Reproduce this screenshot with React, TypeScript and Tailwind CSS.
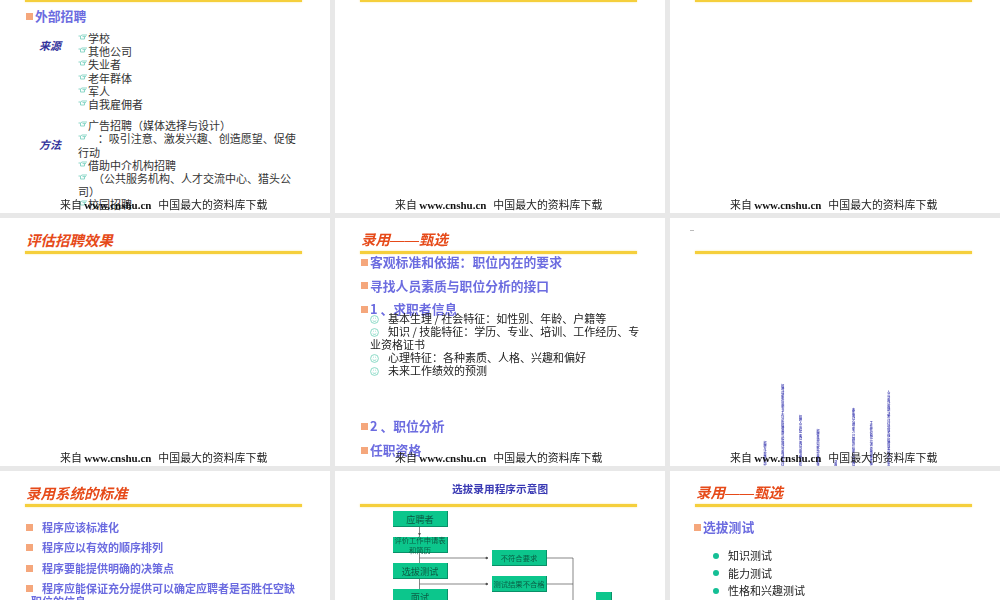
import React from 'react';

const cjk = "font-['Noto_Sans_CJK_SC','Noto_Sans',sans-serif]";

const Square = () => <span className="inline-block w-[7px] h-[7px] bg-[#f5a77c] align-[1px]" />;

const Footer = () => (
  <div className="absolute left-[60px] bottom-[1px] z-10 whitespace-pre text-[10.9px] leading-[14px] text-[#222] font-['Noto_Sans_CJK_SC',sans-serif]">
    来自 <span className="font-['Liberation_Serif',serif] font-bold text-[11px] text-[#111] mr-[2px]">www.cnshu.cn</span>  中国最大的资料库下载
  </div>
);

const Slide = ({ title, children }: { title?: React.ReactNode; children?: React.ReactNode }) => (
  <div className={`relative bg-white overflow-hidden ${cjk}`}>
    <div className="h-[33px] flex items-end pl-[26px] pb-[1px] text-[14.5px] leading-[20px] font-bold italic text-[#e64a19]">
      {title}
    </div>
    <div className="mx-[25px] w-[277px] h-[3px] bg-[#f5cf3c] shadow-[0_0_2px_#f8e48c]" />
    {children}
    <Footer />
  </div>
);

const ScreenTitle = () => (
  <span>
    录用<span className="font-['Liberation_Sans',sans-serif] font-normal">——</span>甄选
  </span>
);

// pointing hand bullet
const Hand = () => (
  <svg width="10" height="7" viewBox="0 0 10 7" className="inline-block align-[2px]" fill="none" stroke="#7fd3c2" strokeWidth="0.9">
    <path d="M0.5 2H2.5L4 1H9M4.5 2.6H8M2.5 2V5H6.5V2.8" />
  </svg>
);

const Heading = ({ children, className = '' }: { children: React.ReactNode; className?: string }) => (
  <div className={`flex items-center gap-[2px] text-[12.8px] leading-[18px] font-bold text-[#6c6ce0] ${className}`}>
    <Square />
    <span>{children}</span>
  </div>
);

const sources = ['学校', '其他公司', '失业者', '老年群体', '军人', '自我雇佣者'];
const methods = [
  '广告招聘（媒体选择与设计）',
  '    ：吸引注意、激发兴趣、创造愿望、促使行动',
  '借助中介机构招聘',
  '  （公共服务机构、人才交流中心、猎头公司）',
  '校园招聘',
];

const HandList = ({ items }: { items: string[] }) => (
  <div className="w-[224px] text-[11px] leading-[13.2px] text-[#333]">
    {items.map((t) => (
      <div key={t} className="whitespace-pre-wrap">
        <Hand />
        {t}
      </div>
    ))}
  </div>
);

const Label = ({ children }: { children: React.ReactNode }) => (
  <div className="text-[11px] leading-[14px] font-bold italic text-[#34349c]">{children}</div>
);

const ExternalSlide = () => (
  <Slide>
    <div className="pl-[26px] pt-[5px]">
      <Heading>外部招聘</Heading>
      <div className="pl-[13px] pt-[7px] flex">
        <div className="w-[39px] pt-[6px]">
          <Label>来源</Label>
        </div>
        <HandList items={sources} />
      </div>
      <div className="pl-[13px] pt-[8px] flex">
        <div className="w-[39px] pt-[18px]">
          <Label>方法</Label>
        </div>
        <HandList items={methods} />
      </div>
    </div>
  </Slide>
);

const traits = [
  '基本生理 / 社会特征：如性别、年龄、户籍等',
  '知识 / 技能特征：学历、专业、培训、工作经历、专业资格证书',
  '心理特征：各种素质、人格、兴趣和偏好',
  '未来工作绩效的预测',
];

const ScreenSlide = () => (
  <Slide title={<ScreenTitle />}>
    <div className="pl-[26px] pr-[20px] -mt-[4px]">
      <Heading className="h-[24px]">客观标准和依据：职位内在的要求</Heading>
      <Heading className="h-[23px]">寻找人员素质与职位分析的接口</Heading>
      <Heading className="h-[24px]">1 、求职者信息</Heading>
      <div className="-mt-[9px] pl-[9px] w-[284px] text-[11px] leading-[13px] text-[#222]">
        {traits.map((t) => (
          <div key={t}>
            <svg width="9" height="9" viewBox="0 0 9 9" className="inline-block mr-[9px] align-[-1px]" fill="none" stroke="#6fd0b8" strokeWidth="0.8">
              <circle cx="4.5" cy="4.5" r="3.9" />
              <path d="M2.7 5.4C3.4 6.7 5.6 6.7 6.3 5.4M3 3.2h.7M5.3 3.2h.7" />
            </svg>
            {t}
          </div>
        ))}
      </div>
      <Heading className="mt-[37px] h-[24px]">2 、职位分析</Heading>
      <Heading className="h-[24px]">任职资格</Heading>
    </div>
  </Slide>
);

const columns = [
  '招聘方式渠道 内部',
  '招聘计划职位说明书工作 分析招聘渠道 选拔测试录用决策评估',
  '招聘人员 选拔 面试 测试 录用决策 评估',
  '招聘来源 内部外部 渠道选择',
  '录用',
  '素质测试 心理 能力 兴趣 知识 技能 结构面试',
  '工作经历 面试 培训 资格审查 考核',
  '人员录用 试用期 决策 评估 绩效考核 招聘效果 成本分析表',
];

const ChartSlide = () => (
  <Slide>
    <div className="absolute left-[20px] top-[12px] w-[4px] h-[1px] bg-[#bbb]" />
    <div className="absolute left-[93px] bottom-0 flex items-end gap-[14.7px]">
      {columns.map((c) => (
        <div key={c} className="w-[3px] whitespace-nowrap text-[3px] leading-[3px] text-[#3a3ab0] font-bold [writing-mode:vertical-rl]">
          {c}
        </div>
      ))}
    </div>
  </Slide>
);

const standards = ['程序应该标准化', '程序应以有效的顺序排列', '程序要能提供明确的决策点'];

const StandardSlide = () => (
  <Slide title="录用系统的标准">
    <div className="pl-[26px] pr-[28px] pt-[14px] text-[11px] leading-[13px] font-bold text-[#6c6ce0]">
      {standards.map((t) => (
        <div key={t} className="h-[20.3px]">
          <Square />
          <span className="ml-[9px]">{t}</span>
        </div>
      ))}
      <div>
        <Square />
        <span className="ml-[9px]">程序应能保证充分提供可以确定应聘者是否胜任空缺</span>
        <div className="pl-[5px]">职位的信息</div>
      </div>
    </div>
  </Slide>
);

const FlowBox = ({ x, y, w = 55, h = 16, size = 9.2, children }: { x: number; y: number; w?: number; h?: number; size?: number; children: React.ReactNode }) => (
  <div
    style={{ left: x, top: y, width: w, height: h, fontSize: size }}
    className="absolute flex items-center justify-center text-center leading-[10px] bg-[#0cc68c] border-b border-r border-[#0a8f68] text-[#0b5c44]"
  >
    {children}
  </div>
);

const FlowSlide = () => (
  <Slide>
    <div className="absolute left-0 right-0 top-[11px] text-center text-[10.7px] leading-[14px] font-bold text-[#3a3ab4]">
      选拔录用程序示意图
    </div>
    <div className="absolute left-0 top-0 w-full h-full">
      <svg width="330" height="248" className="absolute left-0 top-0" fill="none" stroke="#555" strokeWidth="0.7">
        <path d="M84.5 56V118" />
        <path d="M84.5 87H153" />
        <path d="M84.5 113H153" />
        <path d="M212 87H238V135" />
        <path d="M212 113H238" />
        <path d="M84.5 64l-1 -1.5h2z M153 87l-2 -1v2z M153 113l-2 -1v2z" fill="#222" />
      </svg>
      <FlowBox x={58} y={40}>应聘者</FlowBox>
      <FlowBox x={58} y={66} size={7.3}>评价工作申请表和简历</FlowBox>
      <FlowBox x={58} y={92}>选拔测试</FlowBox>
      <FlowBox x={58} y={118}>面试</FlowBox>
      <FlowBox x={157} y={79} size={7.3}>不符合要求</FlowBox>
      <FlowBox x={157} y={105} size={7.3}>测试结果不合格</FlowBox>
      <FlowBox x={261} y={121} w={16} h={40}>不</FlowBox>
    </div>
  </Slide>
);

const tests = ['知识测试', '能力测试', '性格和兴趣测试'];

const TestSlide = () => (
  <Slide title={<ScreenTitle />}>
    <div className="pl-[24px] pt-[11px]">
      <Heading>选拔测试</Heading>
      <div className="pl-[19px] pt-[11px] flex flex-col text-[11px] leading-[17.5px] text-[#222]">
        {tests.map((t) => (
          <div key={t} className="flex items-center gap-[9px]">
            <span className="w-[6px] h-[6px] rounded-full bg-[#14bf95]" />
            {t}
          </div>
        ))}
      </div>
    </div>
  </Slide>
);

export default function App() {
  return (
    <div lang="zh-CN" className="w-[1000px] h-[600px] overflow-hidden bg-[#e8e8e8]">
      <div className="-mt-[34px] grid grid-cols-[330px_330px_330px] grid-rows-[247px_248px_247px] gap-x-[5px] gap-y-[5px] blur-[0.35px]">
        <ExternalSlide />
        <Slide />
        <Slide />
        <Slide title="评估招聘效果" />
        <ScreenSlide />
        <ChartSlide />
        <StandardSlide />
        <FlowSlide />
        <TestSlide />
      </div>
    </div>
  );
}
